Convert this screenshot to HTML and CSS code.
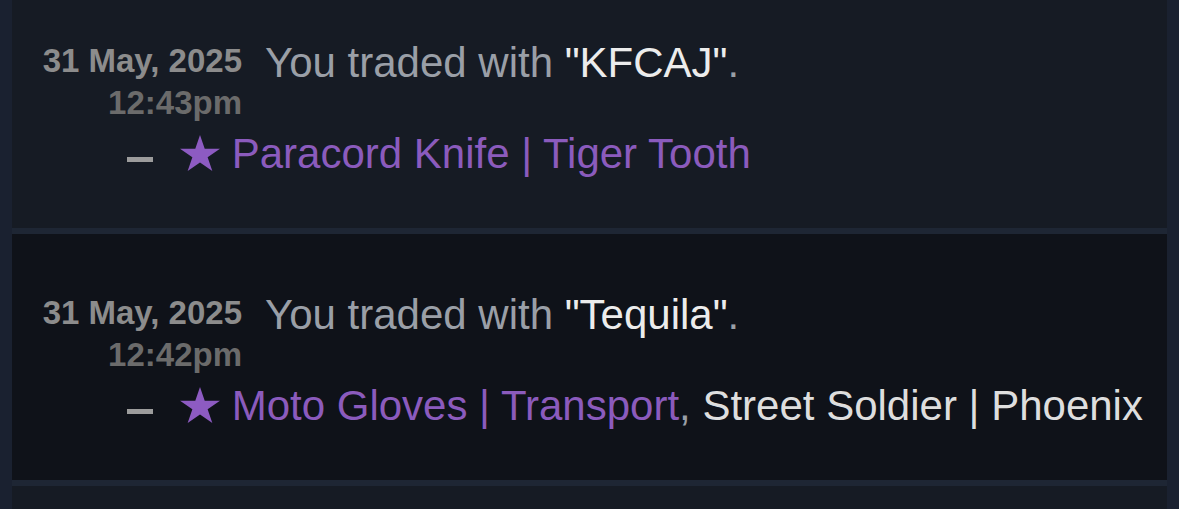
FILE: index.html
```html
<!DOCTYPE html>
<html lang="en">
<head>
<meta charset="utf-8">
<title>Trade History</title>
<link rel="stylesheet" href="styles.css">
</head>
<body>
<div class="history">
  <div class="trade">
    <div class="trade-head">
      <div class="when">
        <div class="date">31 May, 2025</div>
        <div class="time">12:43pm</div>
      </div>
      <div class="desc">You traded with <span class="name">"KFCAJ"</span>.</div>
    </div>
    <div class="items">
      <span class="dash"></span><span class="item rare"><svg class="star" viewBox="0 0 40 38" preserveAspectRatio="none" aria-hidden="true"><polygon points="20,0 24.71,14.51 39.97,14.51 27.63,23.48 32.34,37.99 20,29.02 7.66,37.99 12.37,23.48 0.03,14.51 15.29,14.51"/></svg> Paracord Knife | Tiger Tooth</span>
    </div>
  </div>
  <div class="trade alt">
    <div class="trade-head">
      <div class="when">
        <div class="date">31 May, 2025</div>
        <div class="time">12:42pm</div>
      </div>
      <div class="desc">You traded with <span class="name">"Tequila"</span>.</div>
    </div>
    <div class="items">
      <span class="dash"></span><span class="item rare"><svg class="star" viewBox="0 0 40 38" preserveAspectRatio="none" aria-hidden="true"><polygon points="20,0 24.71,14.51 39.97,14.51 27.63,23.48 32.34,37.99 20,29.02 7.66,37.99 12.37,23.48 0.03,14.51 15.29,14.51"/></svg> Moto Gloves | Transport</span>, <span class="item common">Street Soldier | Phoenix</span>
    </div>
  </div>
  <div class="trade empty"></div>
</div>
</body>
</html>
```
FILE: styles.css
```css
html, body {
  margin: 0;
  padding: 0;
  overflow: hidden;
  background: #1a2130;
  font-family: "Liberation Sans", Arial, Helvetica, sans-serif;
}

.history {
  margin-top: -18px;
  padding: 0 12px;
}

.trade {
  background: #161b24;
  border-bottom: 6px solid #1e2634;
  padding: 58px 0 51px;
  height: 137px;
}

.trade.alt {
  background: #0f1219;
}

.trade.empty {
  height: 23px;
  padding: 0;
  border-bottom: 0;
}

.trade-head {
  display: flex;
  align-items: flex-start;
  gap: 23px;
}

.when {
  width: 230px;
  text-align: right;
  font-size: 33px;
  font-weight: bold;
  white-space: nowrap;
}

.date {
  color: #8c8c8c;
  line-height: 41px;
}

.time {
  color: #6b6b6b;
  line-height: 44px;
}

.desc {
  font-size: 42px;
  line-height: 46px;
  color: #9a9fa7;
  white-space: nowrap;
}

.name {
  color: #ececec;
}

.items {
  margin-top: 6px;
  padding-left: 115px;
  font-size: 42px;
  line-height: 46px;
  color: #9a9fa7;
  white-space: nowrap;
}

.dash {
  display: inline-block;
  width: 26px;
  height: 5px;
  background: #9c9c9c;
  vertical-align: 6px;
  margin-right: 27px;
}

.item.rare {
  color: #8b5bbd;
}

.item.common {
  color: #dedede;
}

.star {
  width: 40px;
  height: 36px;
  vertical-align: -3px;
  fill: #8d5bc2;
}
```
